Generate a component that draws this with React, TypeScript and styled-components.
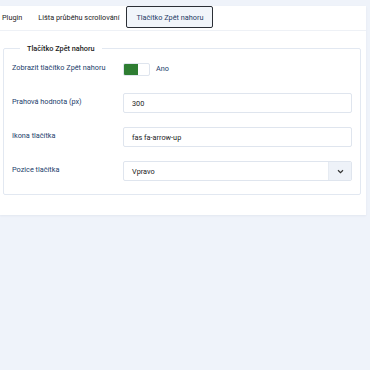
import React from 'react'
import styled, { createGlobalStyle } from 'styled-components'

const GlobalStyle = createGlobalStyle`
  html, body {
    margin: 0;
    padding: 0;
    background: #eff3fa;
    font-family: Roboto, "Noto Sans", sans-serif;
  }
`

const Page = styled.div`
  width: 370px;
  height: 370px;
  padding-top: 6px;
  box-sizing: border-box;
`

const Card = styled.div`
  width: 366px;
  height: 209px;
  background: #ffffff;
  box-sizing: border-box;
  box-shadow: 0 1px 2px rgba(30, 50, 90, 0.06);
`

const TabBar = styled.div`
  display: flex;
  align-items: stretch;
  height: 24px;
  border-bottom: 1px solid #eef1f6;
`

const Tab = styled.div<{ active?: boolean }>`
  display: flex;
  align-items: center;
  height: 22px;
  padding: 0 ${({ active }) => (active ? '9px' : '6px 0 7px')};
  font-size: 7.3px;
  color: ${({ active }) => (active ? '#1f3b66' : '#1c1c1c')};
  background: ${({ active }) => (active ? '#f1f5fa' : 'transparent')};
  border: ${({ active }) => (active ? '1px solid #2b2f36' : '1px solid transparent')};
  border-radius: 2px;
  box-sizing: border-box;
  &:first-child {
    padding-left: 1px;
    padding-right: 7px;
  }
`

const Body = styled.div`
  padding: 13px 6px 0 3px;
`

const Fieldset = styled.fieldset`
  margin: 0;
  width: 357px;
  box-sizing: border-box;
  border: 1px solid #e2e8f1;
  border-radius: 2px;
  padding: 10px 8px 13px 8px;
`

const Legend = styled.legend`
  margin-left: 8px;
  padding: 0 7px;
  font-size: 7.3px;
  font-weight: 500;
  color: #1c1c1c;
`

const Row = styled.div`
  display: grid;
  grid-template-columns: 111px 229px;
  align-items: center;
  height: 20px;
  margin-bottom: 14px;
  &:last-child {
    margin-bottom: 0;
  }
`

const ToggleRow = styled(Row)`
  height: 14px;
  margin-bottom: 17px;
  margin-top: -1px;
`

const Label = styled.label`
  font-size: 7.3px;
  color: #22406b;
  margin-top: -3px;
`

const SwitchWrap = styled.div`
  display: flex;
  align-items: center;
  gap: 6px;
`

const Switch = styled.div`
  display: flex;
  width: 27px;
  height: 13px;
  border: 1px solid #dfe5ee;
  border-radius: 2px;
  box-sizing: border-box;
  overflow: hidden;
`

const SwitchOn = styled.div`
  width: 14px;
  background: #2e7d32;
`

const SwitchText = styled.span`
  font-size: 7.3px;
  color: #22406b;
  margin-top: -2px;
`

const Input = styled.div`
  display: flex;
  align-items: center;
  height: 20px;
  padding: 0 8px;
  border: 1px solid #dfe5ee;
  border-radius: 2px;
  box-sizing: border-box;
  font-size: 7.3px;
  color: #1c1c1c;
`

const Select = styled(Input)`
  padding-right: 0;
  justify-content: space-between;
  overflow: hidden;
`

const SelectButton = styled.div`
  display: flex;
  align-items: center;
  justify-content: center;
  width: 22px;
  height: 100%;
  background: #eef2f8;
  border-left: 1px solid #e6ebf2;
`

const App = () => (
  <>
    <GlobalStyle />
    <Page>
      <Card>
        <TabBar>
          <Tab>Plugin</Tab>
          <Tab>Lišta průběhu scrollování</Tab>
          <Tab active>Tlačítko Zpět nahoru</Tab>
        </TabBar>
        <Body>
          <Fieldset>
            <Legend>Tlačítko Zpět nahoru</Legend>
            <ToggleRow>
              <Label>Zobrazit tlačítko Zpět nahoru</Label>
              <SwitchWrap>
                <Switch>
                  <SwitchOn />
                </Switch>
                <SwitchText>Ano</SwitchText>
              </SwitchWrap>
            </ToggleRow>
            <Row>
              <Label>Prahová hodnota (px)</Label>
              <Input>300</Input>
            </Row>
            <Row>
              <Label>Ikona tlačítka</Label>
              <Input>fas fa-arrow-up</Input>
            </Row>
            <Row>
              <Label>Pozice tlačítka</Label>
              <Select>
                Vpravo
                <SelectButton>
                  <svg width="7" height="5" viewBox="0 0 8 6">
                    <path d="M1 1.5 L4 4.5 L7 1.5" fill="none" stroke="#333" strokeWidth="1.4" />
                  </svg>
                </SelectButton>
              </Select>
            </Row>
          </Fieldset>
        </Body>
      </Card>
    </Page>
  </>
)

export default App
